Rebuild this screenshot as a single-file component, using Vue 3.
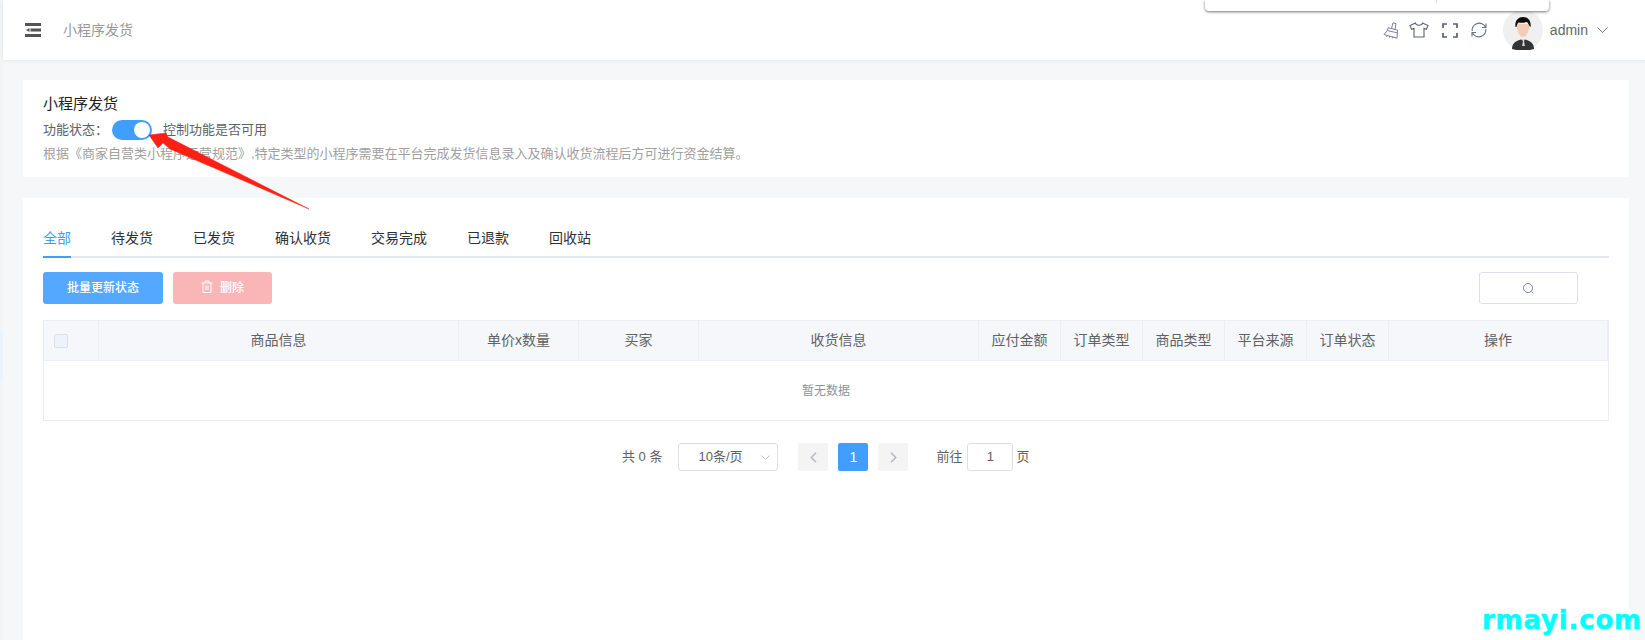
<template>
	<div class="page">
		<div class="side"><div class="side-active"></div></div>
		<div class="main">
			<header class="header">
				<div class="header-left">
					<svg class="menu-icon" width="16" height="14" viewBox="0 0 16 14">
						<path d="M0 0h16v3H0zM5.500 5.500H16v3H5.500zM0 11h16v3H0z" fill="#555" />
						<path d="M4.500 5v4L1 7z" fill="#555" />
					</svg>
					<span class="crumb">小程序发货</span>
				</div>
				<div class="header-right">
					<svg class="tool broom" width="16" height="17" viewBox="0 0 16 17" fill="none" stroke="#7a8294" stroke-width="1">
						<path d="M8.500 6.500L10 .8l3 .8-1 5.900M5.200 5.700l9.300 2.500-.5 8L1 12.500l3.200-3.800z" />
						<path d="M4 13.300l-.3 1.700M6.800 14l-.3 1.700M9.600 14.800l-.3 1.400M4.500 8.500l9.800 2.400" />
					</svg>
					<svg class="tool shirt" width="20" height="16" viewBox="0 0 20 16" fill="none" stroke="#5c6270" stroke-width="1.100">
						<path d="M6.500 1L1 3.600l1.600 3.700 2.400-.9V15h10V6.400l2.400.9L19 3.600 13.500 1c-.4 3-6.600 3-7 0z" />
					</svg>
					<svg class="tool full" width="16" height="15" viewBox="0 0 16 15" fill="none" stroke="#566077" stroke-width="1.700">
						<path d="M1 5V1h4M11 1h4v4M15 10v4h-4M5 14H1v-4" />
					</svg>
					<svg class="tool refresh" width="16" height="16" viewBox="0 0 16 16" fill="none" stroke="#6b7385" stroke-width="1.100">
						<path d="M1.200 9A7 7 0 0 1 13 3.200l1.800 2M15 1.500v4h-4" />
						<path d="M14.800 7A7 7 0 0 1 3 12.800l-1.800-2M1 14.500v-4h4" />
					</svg>
					<svg class="avatar" width="40" height="40" viewBox="0 0 40 40">
						<circle cx="20" cy="20" r="20" fill="#f0f0f0" />
						<path d="M9 39c0-6 4-8 9-9.500h4c5 1.500 9 3.500 9 9.500-3 1-7 1.500-11 1.500S12 40 9 39z" fill="#333" />
						<path d="M18 29h4l-1 2 .8 5h-2.600l.8-5z" fill="#ddd" />
						<path d="M13.500 14c0 6 2.500 13 6.500 13s6.500-7 6.500-13z" fill="#f3cdb6" />
						<path d="M12.500 17c-1-6 2.500-10 7.500-10 5 0 8.500 4 7.500 10l-1-1c-1-2-2-4-3-4-3 1-6 1-8 .5-1 1-2 3-2 4.500z" fill="#0c0c0c" />
					</svg>
					<span class="user">admin</span>
					<svg class="caret" width="11" height="6" viewBox="0 0 11 6" fill="none" stroke="#777" stroke-width="1">
						<path d="M.5.5l5 5 5-5" />
					</svg>
				</div>
			</header>

			<div class="content">
				<section class="card intro">
					<div class="intro-title">小程序发货</div>
					<div class="intro-row">
						<span class="intro-label">功能状态：</span>
						<span class="switch"><i></i></span>
						<span>控制功能是否可用</span>
					</div>
					<div class="intro-desc">
						根据《商家自营类小程序运营规范》,特定类型的小程序需要在平台完成发货信息录入及确认收货流程后方可进行资金结算。
					</div>
				</section>

				<section class="card orders">
					<nav class="tabs">
						<span
							v-for="(tab, i) in tabs"
							:key="tab"
							class="tab"
							:class="{ active: i === 0 }"
							>{{ tab }}</span
						>
					</nav>

					<div class="toolbar">
						<button class="btn primary">批量更新状态</button>
						<button class="btn danger">
							<svg width="12" height="13" viewBox="0 0 12 13" fill="none" stroke="#fff" stroke-width="1">
								<path d="M.5 3h11M4 3V1h4v2M2 3v9.500h8V3M5 5.500v4.500M7 5.500v4.500" />
							</svg>
							<span>删除</span>
						</button>
						<div class="search">
							<svg width="13" height="13" viewBox="0 0 13 13" fill="none" stroke="#808695" stroke-width="1">
								<circle cx="6" cy="6" r="4.500" />
								<path d="M9.500 9.500l2 2" />
							</svg>
						</div>
					</div>

					<div class="table">
						<div class="th"><span class="check"></span></div>
						<div
							v-for="col in columns"
							:key="col"
							class="th"
						>
							{{ col }}
						</div>
						<div class="empty">暂无数据</div>
					</div>

					<div class="pager">
						<span class="pager-text">共 0 条</span>
						<div class="size">
							<span class="pager-text">10条/页</span>
							<svg width="9" height="5" viewBox="0 0 9 5" fill="none" stroke="#c0c4cc" stroke-width="1">
								<path d="M.5.5l4 4 4-4" />
							</svg>
						</div>
						<span class="page-btn prev">
							<svg width="7" height="11" viewBox="0 0 7 11" fill="none" stroke="#b4b8c0" stroke-width="1.500">
								<path d="M6 .8L1.300 5.500 6 10.200" />
							</svg>
						</span>
						<span class="page-btn current">1</span>
						<span class="page-btn next">
							<svg width="7" height="11" viewBox="0 0 7 11" fill="none" stroke="#b4b8c0" stroke-width="1.500">
								<path d="M1 .8l4.700 4.700L1 10.200" />
							</svg>
						</span>
						<span class="pager-text jump">前往</span>
						<span class="jump-input">1</span>
						<span class="pager-text">页</span>
					</div>
				</section>
			</div>
		</div>

		<!-- overlays that sit above the page in the screenshot -->
		<div class="popup"><i></i></div>
		<svg class="arrow" width="170" height="85" viewBox="145 130 170 85">
			<path d="M149 135L166 133 168 137 309 209 170 149 163 143 158 148z" fill="#fb1f14" stroke="#fb1f14" stroke-width="0.500" stroke-linejoin="round" />
		</svg>
		<div class="mark">rmayi.com</div>
	</div>
</template>

<script setup>
const tabs = ['全部', '待发货', '已发货', '确认收货', '交易完成', '已退款', '回收站'];
const columns = ['商品信息', '单价x数量', '买家', '收货信息', '应付金额', '订单类型', '商品类型', '平台来源', '订单状态', '操作'];
</script>

<style>
html,
body {
	margin: 0;
	overflow: hidden;
}
</style>

<style scoped>
.page {
	position: relative;
	display: flex;
	width: 1645px;
	height: 640px;
	overflow: hidden;
	background: #fff;
	font-family: 'Liberation Sans', 'Noto Sans CJK SC', sans-serif;
	font-size: 13px;
	color: #606266;
}
.side {
	width: 3px;
	flex-shrink: 0;
	background: #f3f4f5;
	padding-top: 331px;
	box-sizing: border-box;
}
.side-active {
	height: 50px;
	background: #e8f4ff;
}
.main {
	flex: 1;
	display: flex;
	flex-direction: column;
	min-width: 0;
}
.header {
	height: 60px;
	flex-shrink: 0;
	display: flex;
	align-items: center;
	justify-content: space-between;
	background: #fff;
	box-shadow: 0 1px 4px rgba(0, 21, 41, 0.08);
	position: relative;
}
.header-left {
	display: flex;
	align-items: center;
	padding-left: 22px;
}
.crumb {
	margin-left: 22px;
	margin-bottom: 2px;
	font-size: 14px;
	color: #999;
}
.header-right {
	display: flex;
	align-items: center;
	padding-right: 37px;
}
.tool {
	flex-shrink: 0;
}
.shirt {
	margin-left: 10px;
}
.full {
	margin-left: 13px;
}
.refresh {
	margin-left: 13px;
}
.avatar {
	margin-left: 16px;
}
.user {
	margin-left: 7px;
	font-size: 14px;
	color: #666;
}
.caret {
	margin-left: 9px;
}
.content {
	flex: 1;
	display: flex;
	flex-direction: column;
	gap: 21px;
	padding: 20px 16px 0 20px;
	background: #f5f7f9;
}
.card {
	background: #fff;
}
.intro {
	height: 97px;
	box-sizing: border-box;
	padding: 14px 20px 0;
}
.intro-title {
	font-size: 15px;
	line-height: 20px;
	color: #222;
}
.intro-row {
	display: flex;
	align-items: center;
	height: 20px;
	margin-top: 6px;
	line-height: 20px;
}
.intro-label {
	width: 69px;
}
.switch {
	width: 40px;
	height: 20px;
	margin-right: 11px;
	border-radius: 10px;
	background: #409eff;
	position: relative;
}
.switch i {
	position: absolute;
	top: 2px;
	right: 2px;
	width: 16px;
	height: 16px;
	border-radius: 50%;
	background: #fff;
}
.intro-desc {
	margin-top: 4px;
	line-height: 20px;
	color: #a0a0a0;
}
.orders {
	flex: 1;
	padding: 28px 20px 0;
}
.tabs {
	display: flex;
	height: 30px;
	border-bottom: 2px solid #e4e7ed;
}
.tab {
	height: 30px;
	padding: 0 20px;
	font-size: 14px;
	line-height: 24px;
	color: #303133;
}
.tab:first-child {
	padding-left: 0;
}
.tab.active {
	color: #409eff;
	margin-right: 20px;
	padding-right: 0;
	border-bottom: 2px solid #409eff;
}
.toolbar {
	display: flex;
	align-items: center;
	gap: 10px;
	margin-top: 14px;
}
.btn {
	height: 32px;
	border: none;
	border-radius: 3px;
	padding: 0 0 3px;
	font-family: inherit;
	font-size: 12px;
	font-weight: 500;
	color: #fff;
	display: flex;
	align-items: center;
	justify-content: center;
}
.primary {
	width: 120px;
	background: #55a8ff;
}
.danger {
	width: 99px;
	gap: 7px;
	background: #fab6b6;
}
.search {
	width: 99px;
	height: 32px;
	box-sizing: border-box;
	margin-left: auto;
	margin-right: 31px;
	border: 1px solid #dcdfe6;
	border-radius: 3px;
	display: flex;
	align-items: center;
	justify-content: center;
}
.table {
	display: grid;
	grid-template-columns: 55px 360px 120px 120px 280px repeat(5, 82px) 1fr;
	margin-top: 16px;
	border: 1px solid #ebeef5;
}
.th {
	height: 40px;
	box-sizing: border-box;
	padding-bottom: 3px;
	background: #f5f7fa;
	border-right: 1px solid #ebeef5;
	border-bottom: 1px solid #ebeef5;
	display: flex;
	align-items: center;
	justify-content: center;
	font-size: 14px;
	color: #606266;
}
.th:last-of-type {
	border-right: none;
}
.check {
	width: 14px;
	height: 14px;
	box-sizing: border-box;
	margin-right: 20px;
	margin-top: 3px;
	border: 1px solid #dcdfe6;
	border-radius: 2px;
	background: #edf2fc;
}
.empty {
	grid-column: 1 / -1;
	height: 59px;
	box-sizing: border-box;
	padding-bottom: 2px;
	display: flex;
	align-items: center;
	justify-content: center;
	font-size: 12px;
	color: #909399;
}
.pager {
	display: flex;
	align-items: center;
	height: 28px;
	margin-top: 22px;
	padding-left: 579px;
}
.pager-text {
	padding-bottom: 3px;
}
.size {
	width: 100px;
	height: 28px;
	box-sizing: border-box;
	margin-left: 16px;
	padding: 0 7px 0 19px;
	border: 1px solid #dcdfe6;
	border-radius: 3px;
	display: flex;
	align-items: center;
	justify-content: space-between;
}
.page-btn {
	width: 30px;
	height: 28px;
	margin-left: 10px;
	border-radius: 2px;
	background: #f4f4f5;
	display: flex;
	align-items: center;
	justify-content: center;
}
.prev {
	margin-left: 20px;
}
.current {
	background: #409eff;
	color: #fff;
	font-size: 14px;
}
.jump {
	margin-left: 28px;
}
.jump-input {
	width: 46px;
	height: 28px;
	box-sizing: border-box;
	margin: 0 3px 0 5px;
	border: 1px solid #dcdfe6;
	border-radius: 3px;
	text-align: center;
	line-height: 26px;
}
.popup {
	position: absolute;
	left: 1205px;
	top: 0;
	width: 344px;
	height: 11px;
	background: #fff;
	border-radius: 0 0 4px 4px;
	box-shadow: 0 1px 3px rgba(0, 0, 0, 0.55);
}
.popup i {
	position: absolute;
	left: 231px;
	top: 0;
	width: 1px;
	height: 3px;
	background: #ddd;
}
.arrow {
	position: absolute;
	left: 145px;
	top: 130px;
}
.mark {
	position: absolute;
	left: 1482px;
	top: 605px;
	font-family: 'DejaVu Sans', sans-serif;
	font-size: 26px;
	font-weight: 700;
	line-height: 30px;
	letter-spacing: 0.8px;
	color: #00ffff;
	-webkit-text-stroke: 0.5px #00ffff;
}
</style>
